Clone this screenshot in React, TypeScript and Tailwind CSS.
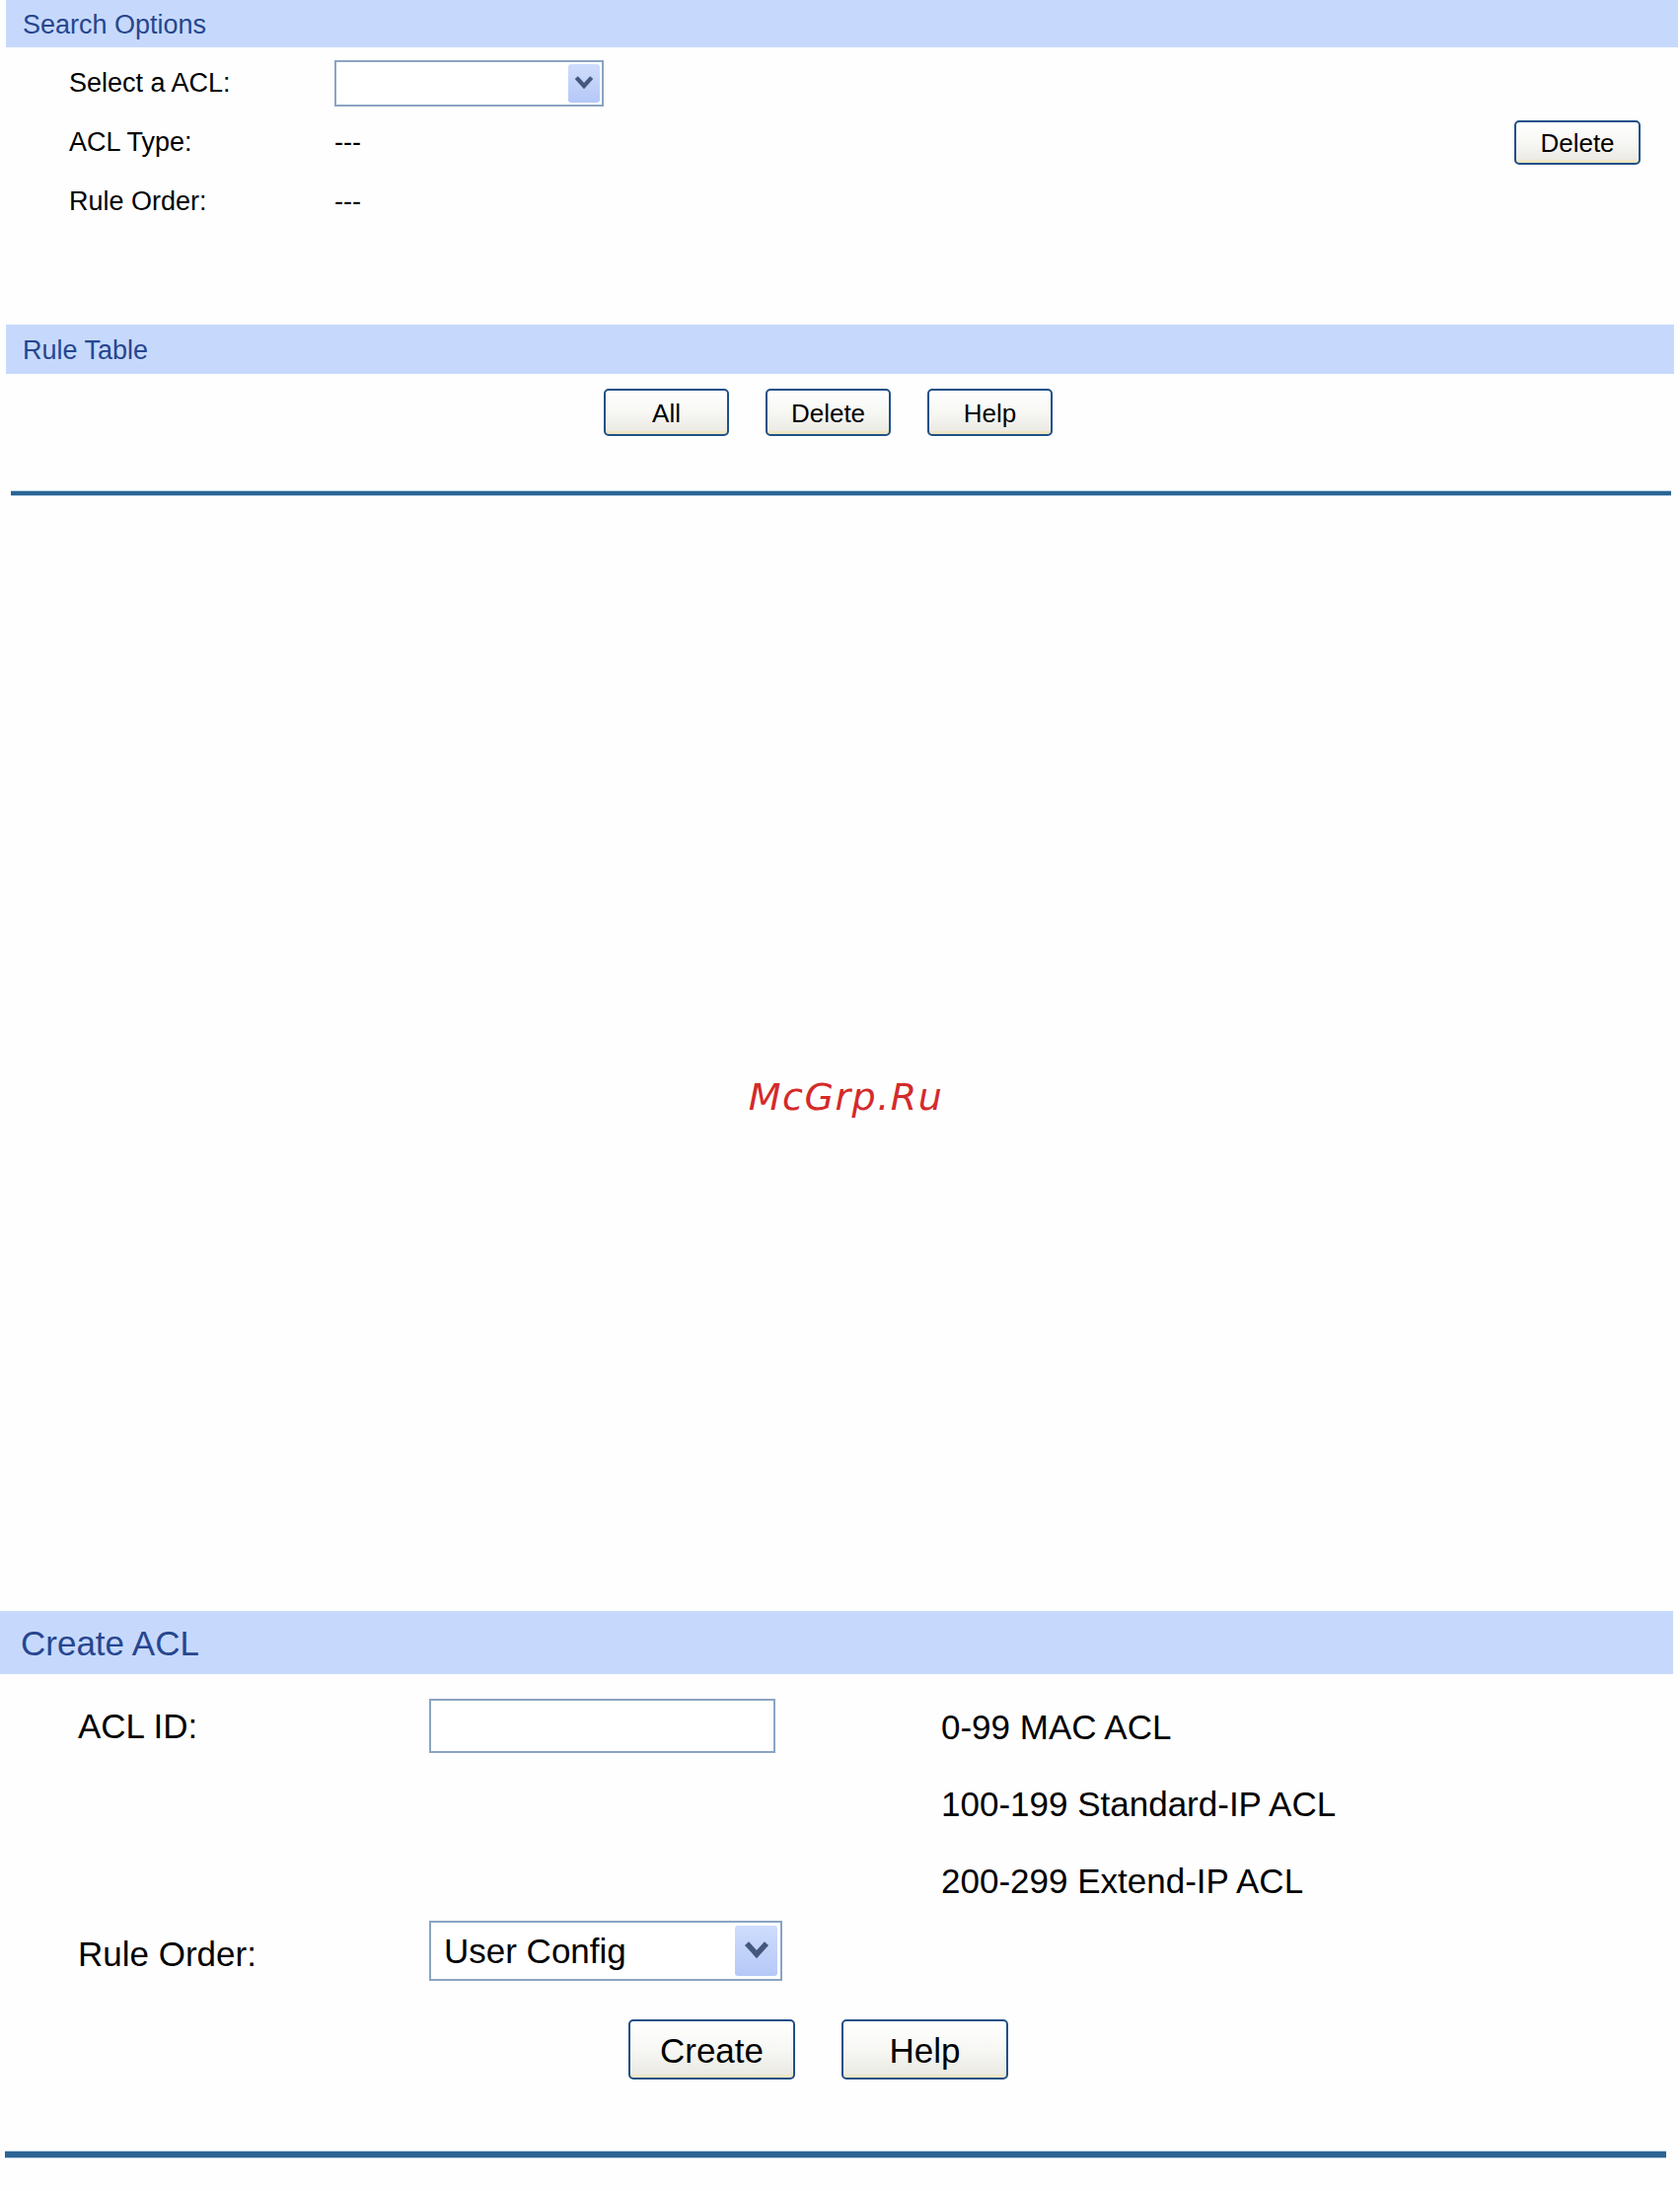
import React from "react";

const font = { fontFamily: '"Liberation Sans", Arial, sans-serif' };

function Chevron({ size }: { size: number }) {
  return (
    <svg width={size} height={size} viewBox="0 0 16 16">
      <path d="M3 5 L8 10.5 L13 5" fill="none" stroke="#44587e" strokeWidth="3.4" strokeLinecap="square" strokeLinejoin="miter" />
    </svg>
  );
}

function XPButton({ children, w, h, text }: { children: React.ReactNode; w: string; h: string; text: string }) {
  return (
    <button
      className={`${w} ${h} ${text} flex items-center justify-center rounded-[5px] border-2 border-[#1f5087] bg-gradient-to-b from-[#ffffff] via-[#f7f7f4] to-[#e9e8e2] pt-[2px] leading-none text-black shadow-[inset_0_-3px_0_#efe6c4]`}
    >
      {children}
    </button>
  );
}

export default function App() {
  return (
    <div className="w-[1703px] min-h-[2221px] bg-[#fefefe] text-black" style={font}>
      {/* Search Options */}
      <div className="ml-[6px] mr-[2px] flex h-[48px] items-center bg-[#c6d9fd] pl-[17px] pt-[2px] text-[27px] leading-none text-[#27468e]">
        Search Options
      </div>
      <div className="mt-[6px] pl-[70px] pr-[40px] text-[27px] leading-none">
        <div className="flex h-[60px] items-center">
          <div className="w-[269px]">Select a ACL:</div>
          <div className="flex h-[47px] w-[273px] items-stretch justify-end border-2 border-[#8aa4c3] bg-white p-[2px]">
            <div className="flex w-[32px] items-center justify-center rounded-[3px] bg-gradient-to-b from-[#cfdcfc] to-[#b5c8f7]">
              <Chevron size={20} />
            </div>
          </div>
        </div>
        <div className="flex h-[60px] items-center">
          <div className="w-[269px]">ACL Type:</div>
          <div>---</div>
          <div className="ml-auto">
            <XPButton w="w-[128px]" h="h-[45px]" text="text-[26px]">Delete</XPButton>
          </div>
        </div>
        <div className="flex h-[60px] items-center">
          <div className="w-[269px]">Rule Order:</div>
          <div>---</div>
        </div>
      </div>

      {/* Rule Table */}
      <div className="ml-[6px] mr-[6px] mt-[95px] flex h-[50px] items-center bg-[#c6d9fd] pl-[17px] pt-[2px] text-[27px] leading-none text-[#27468e]">
        Rule Table
      </div>
      <div className="mt-[15px] flex justify-center gap-[37px] pr-[24px]">
        <XPButton w="w-[127px]" h="h-[48px]" text="text-[26px]">All</XPButton>
        <XPButton w="w-[127px]" h="h-[48px]" text="text-[26px]">Delete</XPButton>
        <XPButton w="w-[127px]" h="h-[48px]" text="text-[26px]">Help</XPButton>
      </div>
      <div className="ml-[11px] mr-[9px] mt-[55px] h-[6px] border-y border-[#b7d0e6] bg-[#2b6493]" />

      {/* Watermark */}
      <div className="mt-[590px] flex justify-center pl-[12px]">
        <div
          className="text-[38px] italic leading-none tracking-[1.5px] text-[#d42a2a]"
          style={{ fontFamily: '"DejaVu Sans", sans-serif' }}
        >
          McGrp.Ru
        </div>
      </div>

      {/* Create ACL */}
      <div className="mr-[7px] mt-[502px] flex h-[64px] items-center bg-[#c6d9fd] pl-[21px] text-[35px] leading-none text-[#27468e]">
        Create ACL
      </div>
      <div className="mt-[13px] grid grid-cols-[356px_519px_1fr] pl-[79px] text-[35px] leading-none">
        <div className="flex h-[78px] items-center">ACL ID:</div>
        <div className="flex h-[78px] items-center">
          <div className="h-[55px] w-[351px] border-2 border-[#8aa4c3] bg-white" />
        </div>
        <div className="flex h-[78px] items-center pt-[2px]">0-99 MAC ACL</div>

        <div className="h-[78px]" />
        <div className="h-[78px]" />
        <div className="flex h-[78px] items-center pt-[2px]">100-199 Standard-IP ACL</div>

        <div className="h-[78px]" />
        <div className="h-[78px]" />
        <div className="flex h-[78px] items-center pt-[2px]">200-299 Extend-IP ACL</div>

        <div className="flex h-[66px] items-center pt-[6px]">Rule Order:</div>
        <div className="flex h-[66px] items-center">
          <div className="flex h-[61px] w-[358px] items-stretch border-2 border-[#8aa4c3] bg-white p-[3px]">
            <div className="flex flex-1 items-center pl-[10px]">User Config</div>
            <div className="flex w-[43px] items-center justify-center rounded-[3px] bg-gradient-to-b from-[#cfdcfc] to-[#b5c8f7]">
              <Chevron size={26} />
            </div>
          </div>
        </div>
        <div className="h-[66px]" />
      </div>
      <div className="mt-[37px] flex justify-center gap-[47px] pr-[44px]">
        <XPButton w="w-[169px]" h="h-[61px]" text="text-[35px]">Create</XPButton>
        <XPButton w="w-[169px]" h="h-[61px]" text="text-[35px]">Help</XPButton>
      </div>
      <div className="ml-[5px] mr-[14px] mt-[72px] h-[8px] border-y border-[#b7d0e6] bg-[#2b6493]" />
    </div>
  );
}
